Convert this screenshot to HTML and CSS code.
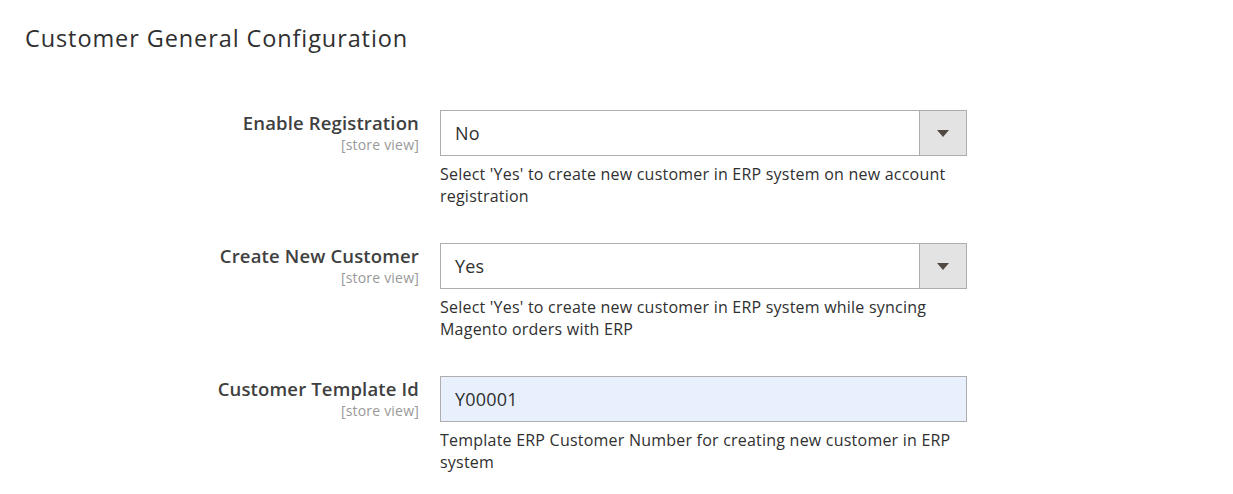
FILE: index.html
```html
<!DOCTYPE html>
<html>
<head>
<meta charset="utf-8">
<link rel="stylesheet" href="styles.css">
</head>
<body>
<div class="page">
  <h1 class="title">Customer General Configuration</h1>
  <div class="rows">
    <div class="row">
      <div class="label">
        <span class="label-text">Enable Registration</span>
        <span class="scope">[store view]</span>
      </div>
      <div class="field">
        <div class="select">
          <span class="value">No</span>
          <span class="arrow"><span class="tri"></span></span>
        </div>
        <div class="note">Select 'Yes' to create new customer in ERP system on new account registration</div>
      </div>
    </div>
    <div class="row">
      <div class="label">
        <span class="label-text">Create New Customer</span>
        <span class="scope">[store view]</span>
      </div>
      <div class="field">
        <div class="select">
          <span class="value">Yes</span>
          <span class="arrow"><span class="tri"></span></span>
        </div>
        <div class="note">Select 'Yes' to create new customer in ERP system while syncing Magento orders with ERP</div>
      </div>
    </div>
    <div class="row">
      <div class="label">
        <span class="label-text">Customer Template Id</span>
        <span class="scope">[store view]</span>
      </div>
      <div class="field">
        <div class="input"><span class="value">Y00001</span></div>
        <div class="note">Template ERP Customer Number for creating new customer in ERP system</div>
      </div>
    </div>
  </div>
</div>
</body>
</html>
```
FILE: styles.css
```css
html, body {
  margin: 0;
  padding: 0;
  background: #ffffff;
}
body {
  font-family: "Open Sans", "Liberation Sans", sans-serif;
  color: #303030;
}
.page {
  padding: 0 25px;
}
.title {
  margin: 0;
  padding-top: 22px;
  font-size: 23.5px;
  font-weight: 400;
  letter-spacing: 0.9px;
  line-height: 32px;
  color: #303030;
}
.rows {
  margin-top: 56px;
}
.row {
  display: grid;
  grid-template-columns: 394px 527px;
  column-gap: 21px;
  margin-bottom: 36px;
}
.label {
  display: flex;
  flex-direction: column;
  align-items: flex-end;
  padding-top: 0;
}
.label-text {
  font-size: 18.5px;
  font-weight: 600;
  line-height: 25px;
  letter-spacing: 0.15px;
  color: #404040;
}
.scope {
  font-size: 14px;
  line-height: 19px;
  letter-spacing: 0.2px;
  color: #999999;
}
.field {
  display: flex;
  flex-direction: column;
}
.select, .input {
  height: 46px;
  box-sizing: border-box;
  border: 1px solid #adadad;
  display: flex;
  align-items: center;
  background: #ffffff;
}
.input {
  background: #e8f0fe;
}
.value {
  flex: 1;
  padding-left: 14px;
  font-size: 18px;
  letter-spacing: 0.2px;
  color: #303030;
}
.arrow {
  width: 47px;
  height: 100%;
  box-sizing: border-box;
  border-left: 1px solid #adadad;
  background: #e3e3e3;
  display: flex;
  align-items: center;
  justify-content: center;
}
.tri {
  width: 0;
  height: 0;
  border-left: 6px solid transparent;
  border-right: 6px solid transparent;
  border-top: 7px solid #514943;
}
.note {
  margin-top: 7px;
  font-size: 16px;
  line-height: 22px;
  letter-spacing: 0.22px;
  color: #303030;
}
```
